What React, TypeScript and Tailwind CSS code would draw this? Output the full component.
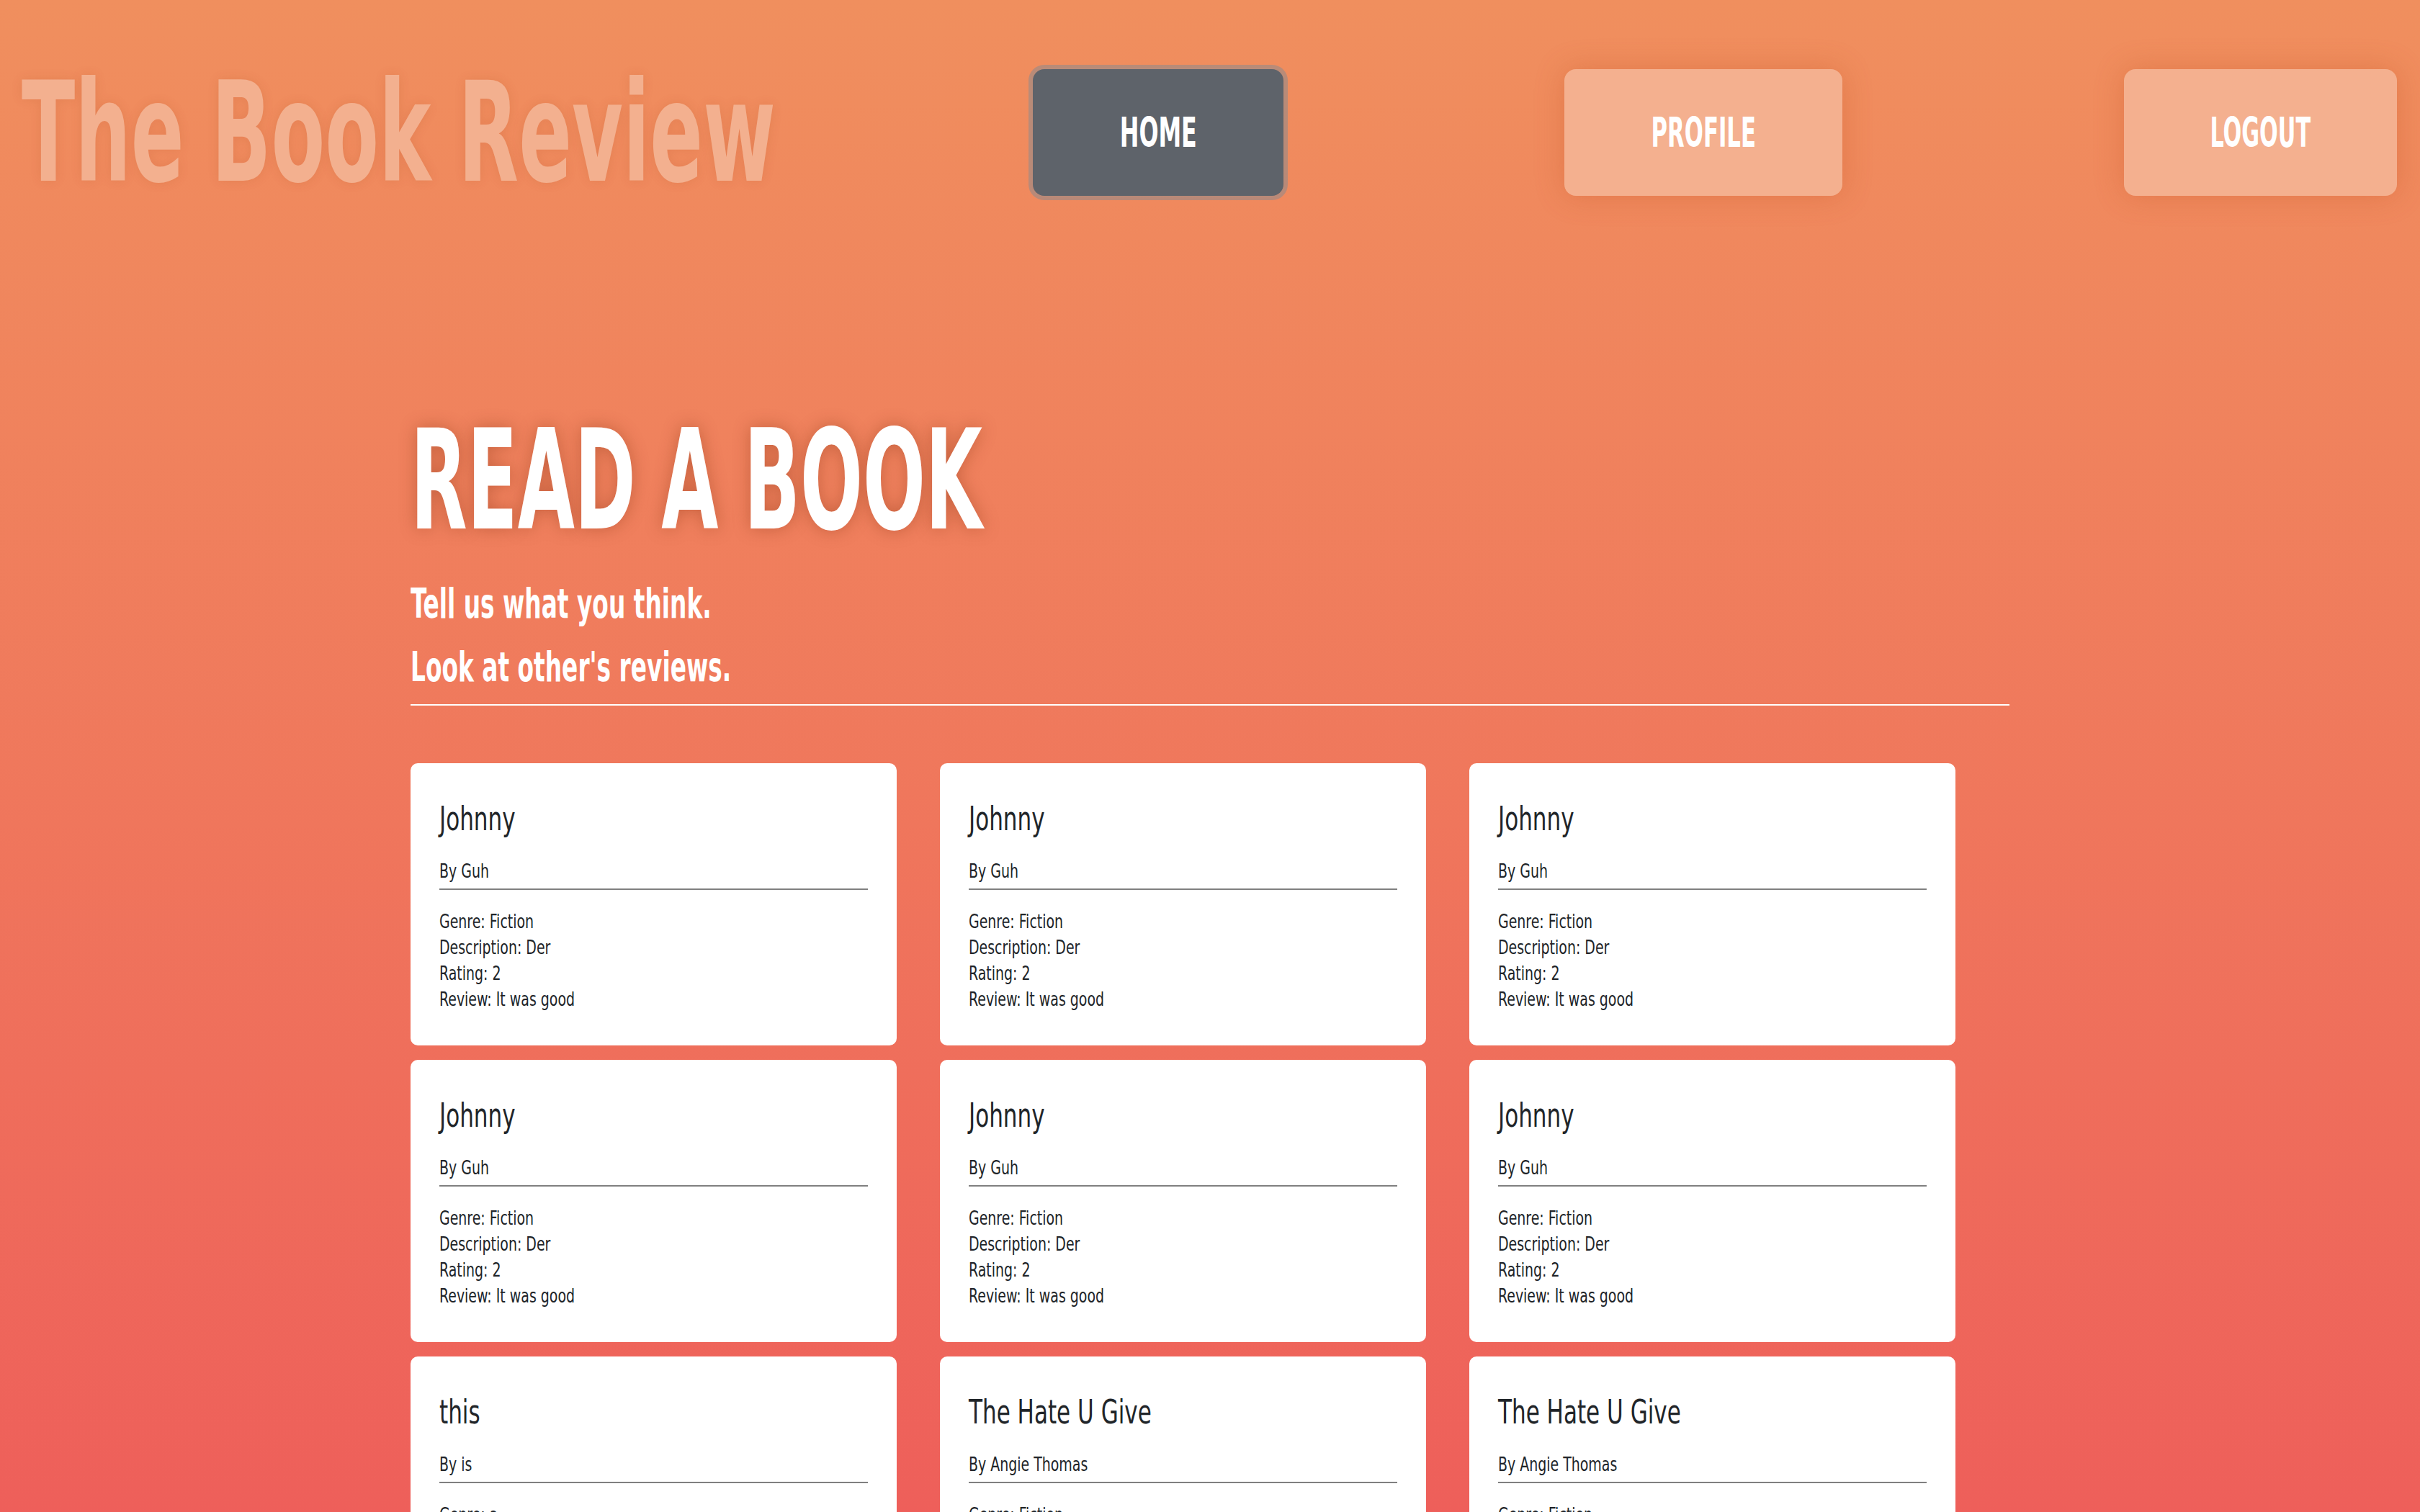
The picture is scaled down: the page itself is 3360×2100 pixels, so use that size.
import React from "react";

interface Review {
  id: number;
  title: string;
  author: string;
  genre: string;
  description: string;
  rating: number;
  review: string;
}

const johnny = {
  title: "Johnny",
  author: "Guh",
  genre: "Fiction",
  description: "Der",
  rating: 2,
  review: "It was good",
};

const hateUGive = {
  title: "The Hate U Give",
  author: "Angie Thomas",
  genre: "Fiction",
  description: "A girl finds her voice",
  rating: 5,
  review: "Loved it",
};

const reviews: Review[] = [
  { id: 1, ...johnny },
  { id: 2, ...johnny },
  { id: 3, ...johnny },
  { id: 4, ...johnny },
  { id: 5, ...johnny },
  { id: 6, ...johnny },
  { id: 7, title: "this", author: "is", genre: "a", description: "test", rating: 1, review: "test" },
  { id: 8, ...hateUGive },
  { id: 9, ...hateUGive },
];

const font =
  "font-['DejaVu_Sans_Condensed','Liberation_Sans_Narrow','Liberation_Sans',sans-serif]";

// narrow text line, squeezed to the condensed look of the original font
const Line = ({ children }: { children: React.ReactNode }) => (
  <p className="whitespace-nowrap">
    <span className="inline-block origin-left scale-x-[0.78]">{children}</span>
  </p>
);

const ReviewCard = ({ item }: { item: Review }) => (
  <div className="w-[675px] h-[392px] bg-white rounded-[10px] px-[40px] pt-[50px] text-[#212529] overflow-hidden">
    <h5 className="text-[46px] leading-[55px] font-normal whitespace-nowrap">
      <span className="inline-block origin-left scale-x-[0.75]">{item.title}</span>
    </h5>
    <div className="mt-[27px] text-[27px] leading-[36px]">
      <Line>By {item.author}</Line>
    </div>
    <hr className="mt-[6px] border-0 h-[2px] bg-[#808080]" />
    <div className="mt-[26px] text-[27px] leading-[36px]">
      <Line>Genre: {item.genre}</Line>
      <Line>Description: {item.description}</Line>
      <Line>Rating: {item.rating}</Line>
      <Line>Review: {item.review}</Line>
    </div>
  </div>
);

const App = () => {
  return (
    <div
      className={`min-h-screen bg-linear-to-b from-[#f08f5e] to-[#ee5f5a] bg-fixed ${font}`}
    >
      {/* Header */}
      <nav className="flex items-center pt-[96px] pl-[30px]">
        <div className="w-[1404px] h-[176px] flex items-center">
          <span className="inline-block origin-left scale-x-[0.627] whitespace-nowrap text-[193px] leading-none font-bold text-[#f3b08f] [text-shadow:0_0_20px_rgba(150,60,20,0.12)]">
            The Book Review
          </span>
        </div>
        <button className="w-[348px] h-[176px] rounded-[16px] bg-[#5e636a] ring-[6px] ring-[#828a91]/50 flex items-center justify-center">
          <span className="inline-block scale-x-[0.62] text-[57px] leading-none font-bold text-white">
            HOME
          </span>
        </button>
        <button className="ml-[390px] w-[386px] h-[176px] rounded-[16px] bg-[#f4b08f] shadow-[0_0_40px_rgba(190,80,30,0.3)] flex items-center justify-center">
          <span className="inline-block scale-x-[0.6] text-[57px] leading-none font-bold text-white">
            PROFILE
          </span>
        </button>
        <button className="ml-[391px] w-[379px] h-[176px] rounded-[16px] bg-[#f4b08f] shadow-[0_0_40px_rgba(190,80,30,0.3)] flex items-center justify-center">
          <span className="inline-block scale-x-[0.59] text-[57px] leading-none font-bold text-white">
            LOGOUT
          </span>
        </button>
      </nav>

      {/* Main */}
      <main className="w-[2220px] mx-auto mt-[299px] pb-[80px]">
        <h1 className="text-[193px] leading-none font-bold text-white whitespace-nowrap">
          <span className="inline-block origin-left scale-x-[0.589] [text-shadow:0_0_30px_rgba(120,40,10,0.35)]">
            READ A BOOK
          </span>
        </h1>
        <div className="mt-[30px] text-[57px] leading-[88px] font-bold text-white whitespace-nowrap">
          <p>
            <span className="inline-block origin-left scale-x-[0.64]">Tell us what you think.</span>
          </p>
          <p>
            <span className="inline-block origin-left scale-x-[0.64]">Look at other's reviews.</span>
          </p>
        </div>
        <hr className="mt-[8px] border-0 h-[2px] bg-white" />

        <div className="mt-[80px] flex flex-wrap gap-x-[60px] gap-y-[20px]">
          {reviews.map((item) => (
            <ReviewCard key={item.id} item={item} />
          ))}
        </div>
      </main>
    </div>
  );
};

export default App;
